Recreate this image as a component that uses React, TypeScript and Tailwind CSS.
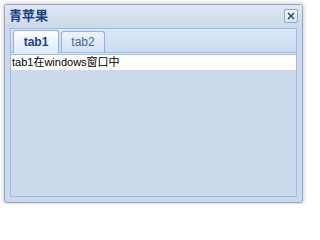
import React, { useState } from 'react';

const tabs = [
  { id: 'tab1', label: 'tab1', body: 'tab1在windows窗口中' },
  { id: 'tab2', label: 'tab2', body: 'tab2在windows窗口中' },
];

const CloseButton: React.FC = () => (
  <button className="w-[14px] h-[14px] flex items-center justify-center rounded-[2px] border border-[#8aa6cf] bg-gradient-to-b from-[#f4f8fd] to-[#d9e5f5] p-0">
    <svg width="8" height="8" viewBox="0 0 8 8">
      <path d="M1 1 L7 7 M7 1 L1 7" stroke="#15428b" strokeWidth="1.4" />
    </svg>
  </button>
);

export default function App() {
  const [active, setActive] = useState('tab1');
  const current = tabs.find((t) => t.id === active)!;

  return (
    <div
      className="w-[307px] h-[204px] bg-white pt-[4px] pl-[4px]"
      style={{ fontFamily: '"Liberation Sans", "Noto Sans CJK SC", sans-serif' }}
    >
      {/* window */}
      <div className="w-[299px] h-[199px] flex flex-col border border-[#8ea7cb] rounded-[3px] bg-[#cad9ec] shadow-[0_0_4px_1px_rgba(0,0,0,0.18)]">
        {/* title bar */}
        <div className="h-[22px] flex items-start justify-between pl-[4px] pr-[4px] pt-[4px] bg-gradient-to-b from-[#e0e7f1] to-[#ccd9ea]">
          <span className="text-[13px] font-bold text-[#15428b] leading-none">青苹果</span>
          <CloseButton />
        </div>

        {/* tab panel */}
        <div className="mx-[5px] mt-[1px] h-[169px] flex flex-col border border-[#99bbe8]">
          {/* strip */}
          <div className="h-[24px] flex items-end gap-[2px] pl-[2px] border-b border-[#99bbe8] bg-gradient-to-b from-[#dce7f6] to-[#cbdcf3]">
            {tabs.map((t) => {
              const on = t.id === active;
              return (
                <button
                  key={t.id}
                  onClick={() => setActive(t.id)}
                  className={
                    on
                      ? 'w-[46px] h-[23px] -mb-px rounded-t-[3px] border border-b-0 border-[#8db2e3] bg-gradient-to-b from-[#ffffff] to-[#dfeafa] text-[12px] font-bold text-[#15428b]'
                      : 'w-[44px] h-[21px] rounded-t-[3px] border border-b-0 border-[#8db2e3] bg-gradient-to-b from-[#eef3fb] to-[#d3e1f3] text-[12px] text-[#416aa3]'
                  }
                >
                  {t.label}
                </button>
              );
            })}
          </div>
          <div className="h-[2px] bg-[#dfeafa] border-b border-[#99bbe8]" />
          {/* body */}
          <div className="h-[15px] bg-white flex items-center pl-[1px] text-[11px] text-black leading-none">
            {current.body}
          </div>
          <div className="flex-1 bg-[#cad9ec]" />
        </div>
      </div>
    </div>
  );
}
